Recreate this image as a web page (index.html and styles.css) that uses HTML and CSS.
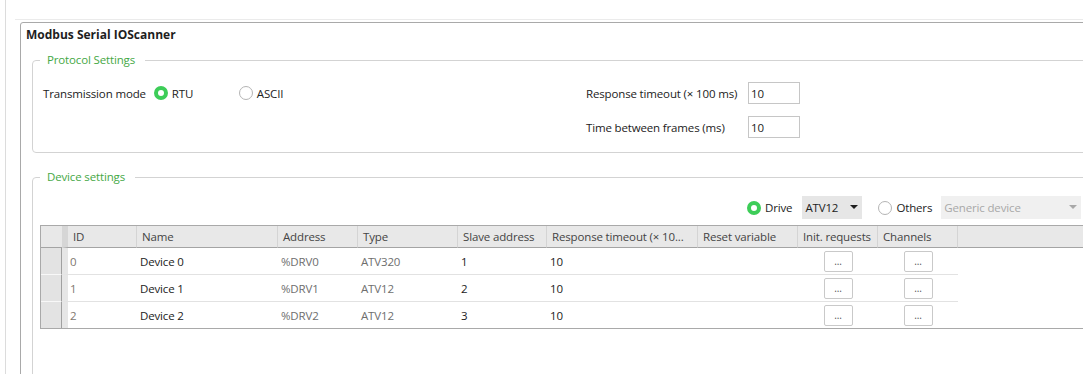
FILE: index.html
```html
<!DOCTYPE html>
<html lang="en">
<head>
    <meta charset="UTF-8">
    <meta name="viewport" content="width=device-width, initial-scale=1.0">
    <title>Modbus Serial IOScanner</title>
    <link rel="stylesheet" href="styles.css">
</head>
<body>
    <div class="shell">
        <div class="topline">
            <div class="frame">
                <div class="frame-title">Modbus Serial IOScanner</div>

                <fieldset class="group group-protocol">
                    <legend>Protocol Settings</legend>
                    <div class="proto-grid">
                        <div class="mode">
                            <span class="mode-label">Transmission mode</span>
                            <span class="radio radio-rtu checked"><span class="dot"></span>RTU</span>
                            <span class="radio"><span class="dot"></span>ASCII</span>
                        </div>
                        <span class="field-label">Response timeout (× 100 ms)</span>
                        <input class="field" type="text" value="10">
                        <span></span>
                        <span class="field-label">Time between frames (ms)</span>
                        <input class="field" type="text" value="10">
                    </div>
                </fieldset>

                <fieldset class="group group-device">
                    <legend>Device settings</legend>
                    <div class="device-bar">
                        <span class="radio checked"><span class="dot"></span>Drive</span>
                        <span class="combo combo-drive">ATV12<i class="arrow"></i></span>
                        <span class="radio"><span class="dot"></span>Others</span>
                        <span class="combo combo-generic">Generic device<i class="arrow"></i></span>
                    </div>

                    <div class="grid">
                        <!-- header -->
                        <div class="hc rh"></div>
                        <div class="hc id">ID</div>
                        <div class="hc">Name</div>
                        <div class="hc">Address</div>
                        <div class="hc">Type</div>
                        <div class="hc">Slave address</div>
                        <div class="hc">Response timeout (× 10...</div>
                        <div class="hc">Reset variable</div>
                        <div class="hc">Init. requests</div>
                        <div class="hc">Channels</div>
                        <div class="hc fill"></div>

                        <!-- device 0 -->
                        <div class="c rh"></div>
                        <div class="c id">0</div>
                        <div class="c">Device 0</div>
                        <div class="c muted">%DRV0</div>
                        <div class="c muted">ATV320</div>
                        <div class="c">1</div>
                        <div class="c">10</div>
                        <div class="c"></div>
                        <div class="c btn-cell"><span class="dots-btn">...</span></div>
                        <div class="c btn-cell"><span class="dots-btn">...</span></div>
                        <div class="c fill"></div>

                        <!-- device 1 -->
                        <div class="c rh"></div>
                        <div class="c id">1</div>
                        <div class="c">Device 1</div>
                        <div class="c muted">%DRV1</div>
                        <div class="c muted">ATV12</div>
                        <div class="c">2</div>
                        <div class="c">10</div>
                        <div class="c"></div>
                        <div class="c btn-cell"><span class="dots-btn">...</span></div>
                        <div class="c btn-cell"><span class="dots-btn">...</span></div>
                        <div class="c fill"></div>

                        <!-- device 2 -->
                        <div class="c rh last"></div>
                        <div class="c id last">2</div>
                        <div class="c last">Device 2</div>
                        <div class="c muted last">%DRV2</div>
                        <div class="c muted last">ATV12</div>
                        <div class="c last">3</div>
                        <div class="c last">10</div>
                        <div class="c last"></div>
                        <div class="c btn-cell last"><span class="dots-btn">...</span></div>
                        <div class="c btn-cell last"><span class="dots-btn">...</span></div>
                        <div class="c fill last"></div>
                    </div>
                </fieldset>
            </div>
        </div>
    </div>
</body>
</html>
```

FILE: styles.css
```css
*{
    margin: 0;
    padding: 0;
    box-sizing: border-box;
}
body{
    width: 1083px;
    height: 374px;
    overflow: hidden;
    background: #fff;
    font-family: "Open Sans", "Noto Sans", sans-serif;
    font-size: 11.5px;
    letter-spacing: -0.15px;
    color: #222;
}

/* outer window lines */
.shell{
    height: 374px;
    overflow: hidden;
    margin-left: 5px;
    border-left: 1px solid #dcdcdc;
    padding-top: 19px;
}
.topline{
    margin-left: 9px;
    border-top: 1px solid #ebebeb;
    padding-top: 2px;
}
.frame{
    width: 1100px;
    height: 353px;
    overflow: hidden;
    margin-left: 5px;
    border: 1px solid #a9a9a9;
    border-radius: 3px 0 0 0;
    padding-left: 5px;
}
.frame-title{
    height: 23px;
    line-height: 23px;
    font-size: 12px;
    font-weight: bold;
    letter-spacing: 0;
    color: #1e1e1e;
}

/* group boxes */
.group{
    margin: 6px 0 0 6px;
    border: 1px solid #d3d3d3;
    border-radius: 4px;
    padding: 0 0 14px 7px;
    min-width: 0;
}
.group legend{
    padding: 0 10px 0 7px;
    line-height: 16px;
    color: #45a845;
}
.group-device{
    margin-top: 16px;
    padding-bottom: 60px;
}

/* protocol settings */
.proto-grid{
    display: grid;
    grid-template-columns: 543px 162px 52px;
    grid-auto-rows: 22px;
    row-gap: 12px;
    align-items: center;
    margin: 14px 0 0 3px;
    white-space: nowrap;
}
.mode{
    display: flex;
    align-items: center;
}
.mode-label{
    margin-right: 8px;
}
.radio{
    display: inline-flex;
    align-items: center;
}
.radio .dot{
    width: 14px;
    height: 14px;
    margin-right: 4px;
    border-radius: 50%;
    border: 1px solid #b4b4b4;
    background: #fff;
}
.radio.checked .dot{
    border: 4px solid #3dcd58;
}
.radio-rtu{
    width: 85px;
}
.field{
    width: 52px;
    height: 22px;
    border: 1px solid #c6c6c6;
    padding-left: 2px;
    font: inherit;
    color: #222;
    outline: none;
}

/* device settings */
.device-bar{
    display: flex;
    align-items: center;
    height: 23px;
    margin-top: 11px;
    padding-left: 707px;
    white-space: nowrap;
}
.combo{
    position: relative;
    height: 23px;
    line-height: 23px;
    padding-left: 3px;
    background: #e6e6e6;
}
.combo-drive{
    width: 60px;
    margin: 0 16px 0 10px;
}
.combo-generic{
    width: 140px;
    margin-left: 9px;
    background: #f0f0f0;
    color: #a8a8a8;
}
.combo .arrow{
    position: absolute;
    right: 4px;
    top: 9px;
    border-left: 4px solid transparent;
    border-right: 4px solid transparent;
    border-top: 4px solid #1e1e1e;
}
.combo-generic .arrow{
    border-top-color: #a8a8a8;
}

/* device table */
.grid{
    display: grid;
    grid-template-columns: 21px 75px 141px 80px 100px 89px 151px 100px 80px 80px 1fr;
    grid-template-rows: 22px 27px 27px 26px;
    margin-top: 6px;
    border-top: 1px solid #a9a9a9;
    border-left: 1px solid #a9a9a9;
    border-bottom: 1px solid #a9a9a9;
}
.hc{
    height: 22px;
    line-height: 21px;
    padding-left: 5px;
    background: #e8e8e8;
    border-right: 1px solid #d4d4d4;
    border-bottom: 1px solid #a4a4a4;
    color: #444;
    white-space: nowrap;
    overflow: hidden;
}
.hc.rh{
    border-right: none;
}
.hc.id{
    border-left: 6px solid #d6d6d6;
}
.hc.fill{
    border-right: none;
}
.c{
    height: 27px;
    line-height: 27px;
    padding-left: 3px;
    border-bottom: 1px solid #e2e2e2;
    white-space: nowrap;
}
.c.rh{
    background: #e3e3e3;
    border-right: 1px solid #a0a0a0;
    border-bottom-color: #f8f8f8;
}
.c.id{
    padding-left: 2px;
    border-left: 6px solid #e6e6e6;
    color: #80776f;
}
.c.muted{
    color: #6e6e6e;
}
.c.fill{
    border-bottom: none;
}
.c.last{
    height: 26px;
    border-bottom: none;
}
.btn-cell{
    display: flex;
    align-items: center;
    justify-content: center;
    padding-left: 0;
}
.dots-btn{
    width: 29px;
    height: 21px;
    line-height: 18px;
    text-align: center;
    font-size: 10px;
    color: #555;
    background: #fff;
    border: 1px solid #c9c9c9;
    border-radius: 2px;
}
```
